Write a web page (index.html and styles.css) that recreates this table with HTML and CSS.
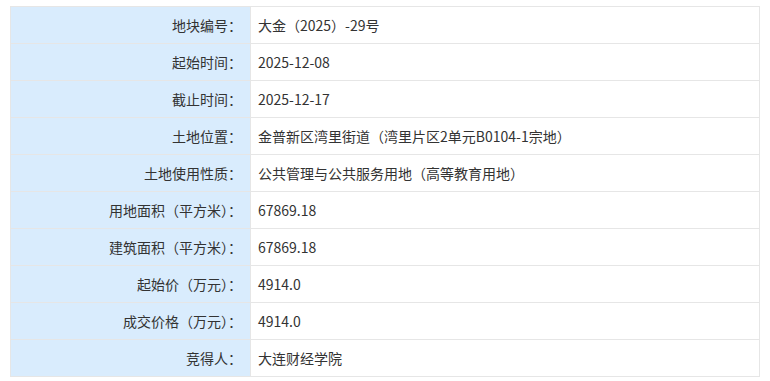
FILE: index.html
```
<!DOCTYPE html>
<html lang="zh-CN">
<head>
<meta charset="utf-8">
<link rel="stylesheet" href="styles.css">
</head>
<body>
<div class="wrap">
<table class="info">
<tr><th>地块编号：</th><td>大金（2025）-29号</td></tr>
<tr><th>起始时间：</th><td>2025-12-08</td></tr>
<tr><th>截止时间：</th><td>2025-12-17</td></tr>
<tr><th>土地位置：</th><td>金普新区湾里街道（湾里片区2单元B0104-1宗地）</td></tr>
<tr><th>土地使用性质：</th><td>公共管理与公共服务用地（高等教育用地）</td></tr>
<tr><th>用地面积（平方米）：</th><td>67869.18</td></tr>
<tr><th>建筑面积（平方米）：</th><td>67869.18</td></tr>
<tr><th>起始价（万元）：</th><td>4914.0</td></tr>
<tr><th>成交价格（万元）：</th><td>4914.0</td></tr>
<tr><th>竞得人：</th><td>大连财经学院</td></tr>
</table>
</div>
</body>
</html>
```
FILE: styles.css
```
html, body {
  margin: 0;
  padding: 0;
  background: #fff;
}
.wrap {
  padding: 6px 0 0 10px;
}
.info {
  border-collapse: collapse;
  width: 750px;
  font-family: "Microsoft YaHei", "Noto Sans CJK SC", sans-serif;
  font-size: 14px;
  color: #333;
}
.info th, .info td {
  border: 1px solid #e6e6e6;
  height: 37px;
  padding: 0;
  box-sizing: border-box;
  font-weight: normal;
}
.info th {
  width: 240px;
  background: #d9ecfd;
  text-align: right;
  padding-right: 8px;
}
.info td {
  text-align: left;
  padding-left: 7px;
}
```
